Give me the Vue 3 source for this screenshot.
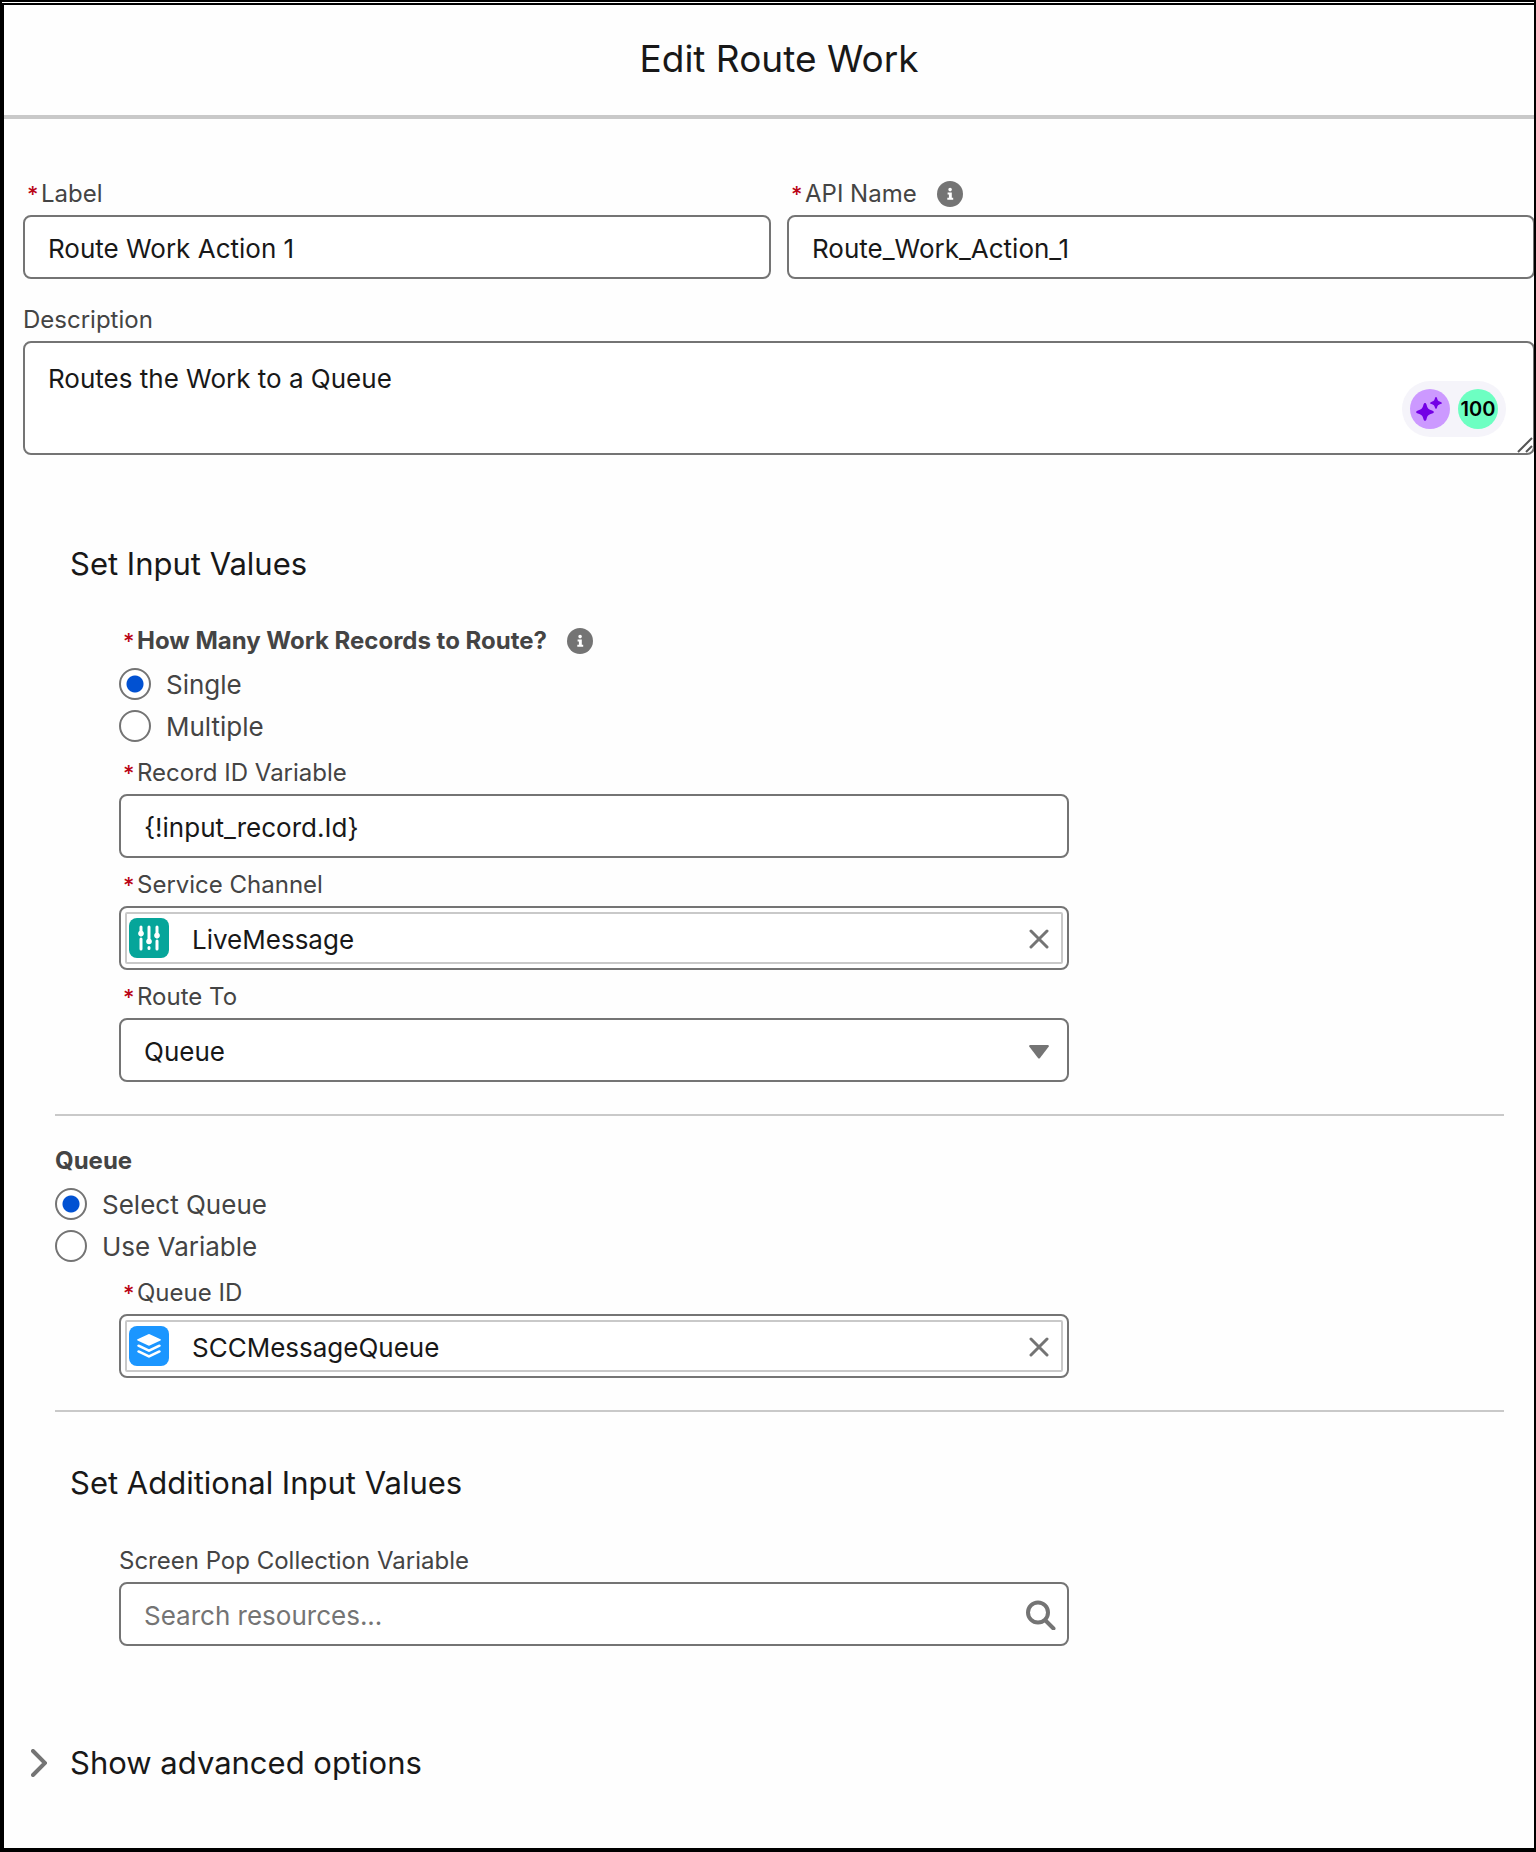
<template>
  <div class="frame">
    <form class="panel" @submit.prevent>
      <header class="header">
        <h1>Edit Route Work</h1>
      </header>

      <div class="details">
        <div class="row">
          <div class="field">
            <div class="label-line">
              <label for="label"><abbr>*</abbr>Label</label>
            </div>
            <input id="label" v-model="label" class="box" type="text" required />
          </div>
          <div class="field">
            <div class="label-line">
              <label for="api-name"><abbr>*</abbr>API Name</label>
              <button type="button" class="info" aria-label="Help">
                <svg viewBox="0 0 26 26">
                  <circle cx="13" cy="13" r="13" />
                  <path d="M11.3 8.6a1.8 1.8 0 1 1 3.6 0a1.8 1.8 0 1 1-3.6 0zM10.6 11.6h4.2v5.2h1.4v2h-5.9v-2h1.6v-3.2h-1.3z" />
                </svg>
              </button>
            </div>
            <input id="api-name" v-model="apiName" class="box" type="text" required />
          </div>
        </div>

        <div class="field description">
          <div class="label-line">
            <label for="description">Description</label>
          </div>
          <div class="area">
            <textarea id="description" v-model="description" class="box"></textarea>
            <div class="badges">
              <button type="button" class="badge sparkle" aria-label="Assistant">
                <svg viewBox="0 0 40 40">
                  <path d="M15 14c.8 0 1.200.6 1.500 1.500c1.200 4.200 1.400 4.400 5.600 5.900c2.400.8 2.400 2.400 0 3.200c-4.200 1.500-4.400 1.700-5.600 5.600c-.6 2.200-2.400 2.200-3 0c-1.200-3.900-1.400-4.100-5.600-5.600c-2.400-.8-2.400-2.400 0-3.200c4.200-1.500 4.400-1.700 5.600-5.900c.3-.9.700-1.500 1.500-1.500z" />
                  <path d="M26 8c.5 0 .8.400 1 1c.8 2.700.9 2.900 3.700 3.900c1.600.5 1.600 1.700 0 2.200c-2.800 1-2.900 1.200-3.700 3.700c-.4 1.500-1.600 1.500-2 0c-.8-2.500-.9-2.700-3.700-3.700c-1.600-.5-1.600-1.700 0-2.200c2.800-1 2.900-1.200 3.700-3.900c.2-.6.500-1 1-1z" />
                </svg>
              </button>
              <button type="button" class="badge score">100</button>
            </div>
            <svg class="grip" viewBox="0 0 16 16">
              <path d="M1 15L15 1M9 15l6-6" />
            </svg>
          </div>
        </div>
      </div>

      <section class="section">
        <h2>Set Input Values</h2>
        <div class="inputs">
          <fieldset>
            <legend class="label-line">
              <span><abbr>*</abbr>How Many Work Records to Route?</span>
              <button type="button" class="info" aria-label="Help">
                <svg viewBox="0 0 26 26">
                  <circle cx="13" cy="13" r="13" />
                  <path d="M11.3 8.6a1.8 1.8 0 1 1 3.6 0a1.8 1.8 0 1 1-3.6 0zM10.6 11.6h4.2v5.2h1.4v2h-5.9v-2h1.6v-3.2h-1.3z" />
                </svg>
              </button>
            </legend>
            <label v-for="option in countOptions" :key="option" class="radio">
              <input v-model="count" type="radio" name="count" :value="option" />
              {{ option }}
            </label>
          </fieldset>

          <div class="field">
            <div class="label-line">
              <label for="record-id"><abbr>*</abbr>Record ID Variable</label>
            </div>
            <input id="record-id" v-model="recordId" class="box" type="text" required />
          </div>

          <div class="field">
            <div class="label-line">
              <label for="channel"><abbr>*</abbr>Service Channel</label>
            </div>
            <div class="box lookup">
              <div class="pill">
                <svg class="entity channel" viewBox="0 0 40 40">
                  <path d="M12 9v8M12 21v10M20 9v14M20 29.500v1M28 9v10M28 23v8" />
                  <circle cx="12" cy="15.500" r="2.800" />
                  <circle cx="20" cy="23.500" r="2.800" />
                  <circle cx="28" cy="17.500" r="2.800" />
                </svg>
                <input id="channel" v-model="channel" type="text" readonly />
                <button type="button" class="clear" aria-label="Clear service channel" @click="channel = ''">
                  <svg viewBox="0 0 20 20"><path d="M2 2l16 16M18 2L2 18" /></svg>
                </button>
              </div>
            </div>
          </div>

          <div class="field">
            <div class="label-line">
              <label for="route-to"><abbr>*</abbr>Route To</label>
            </div>
            <div class="select">
              <select id="route-to" v-model="routeTo" class="box">
                <option>Queue</option>
                <option>Agent</option>
                <option>Skills</option>
              </select>
              <svg class="caret" viewBox="0 0 20 14"><path d="M1 0h18q1.500.5.600 1.700L11 13q-1 1.200-2 0L.4 1.700Q-.5.500 1 0z" /></svg>
            </div>
          </div>
        </div>
      </section>

      <section class="queue">
        <fieldset>
          <legend class="label-line">Queue</legend>
          <label v-for="option in queueOptions" :key="option" class="radio">
            <input v-model="queueMode" type="radio" name="queue-mode" :value="option" />
            {{ option }}
          </label>
        </fieldset>
        <div class="inputs">
          <div class="field">
            <div class="label-line">
              <label for="queue-id"><abbr>*</abbr>Queue ID</label>
            </div>
            <div class="box lookup">
              <div class="pill">
                <svg class="entity stack" viewBox="0 0 40 40">
                  <path d="M20.700 8.200L31.500 13.200q1 .6 0 1.200L20.700 19.600q-.7.300-1.400 0L8.500 14.400q-1-.6 0-1.200L19.300 8.200q.7-.3 1.400 0z" />
                  <path d="M8.300 19.200q.9-1.200 2.300-.5L20 23.200l9.400-4.500q1.400-.7 2.300.5q.4.900-.6 1.500L20.700 25.800q-.7.300-1.400 0L8.900 20.700q-1-.6-.6-1.500z" />
                  <path d="M8.300 24.900q.9-1.200 2.300-.5L20 28.900l9.400-4.500q1.400-.7 2.300.5q.4.900-.6 1.500L20.700 31.500q-.7.300-1.400 0L8.900 26.400q-1-.6-.6-1.500z" />
                </svg>
                <input id="queue-id" v-model="queueId" type="text" readonly />
                <button type="button" class="clear" aria-label="Clear queue" @click="queueId = ''">
                  <svg viewBox="0 0 20 20"><path d="M2 2l16 16M18 2L2 18" /></svg>
                </button>
              </div>
            </div>
          </div>
        </div>
      </section>

      <section class="section additional">
        <h2>Set Additional Input Values</h2>
        <div class="inputs">
          <div class="field">
            <div class="label-line">
              <label for="screen-pop">Screen Pop Collection Variable</label>
            </div>
            <div class="box search">
              <input id="screen-pop" v-model="screenPop" type="text" placeholder="Search resources..." />
              <svg viewBox="0 0 30 30"><circle cx="12" cy="12.500" r="10" /><path d="M19.500 20.500l8 8" /></svg>
            </div>
          </div>
        </div>
      </section>

      <button type="button" class="advanced" :aria-expanded="showAdvanced" @click="showAdvanced = !showAdvanced">
        <svg viewBox="0 0 16 28"><path d="M2 2l12 12L2 26" /></svg>
        Show advanced options
      </button>
    </form>
  </div>
</template>

<script setup>
import { ref } from 'vue'

const label = ref('Route Work Action 1')
const apiName = ref('Route_Work_Action_1')
const description = ref('Routes the Work to a Queue')

const countOptions = ['Single', 'Multiple']
const count = ref('Single')
const recordId = ref('{!input_record.Id}')
const channel = ref('LiveMessage')
const routeTo = ref('Queue')

const queueOptions = ['Select Queue', 'Use Variable']
const queueMode = ref('Select Queue')
const queueId = ref('SCCMessageQueue')

const screenPop = ref('')
const showAdvanced = ref(false)
</script>

<style>
body {
  margin: 0;
  background: white;
}
</style>

<style scoped>
* {
  box-sizing: border-box;
}

.frame {
  min-height: 100vh;
  display: flex;
  border: 2px solid black;
  padding-top: 1px;
  font-family: Inter, "Liberation Sans", sans-serif;
  font-size: 26px;
  color: #181818;
}

.panel {
  flex: 1;
  min-width: 0;
  border: 2px solid black;
  border-right: 0;
  background: #fefefe;
  overflow: hidden;
}

.header {
  height: 114px;
  display: flex;
  align-items: center;
  justify-content: center;
  padding: 0 0 2px 20px;
  border-bottom: 4px solid #c9c9c9;
}

h1, h2 {
  margin: 0;
  font-weight: 400;
}

h1 {
  font-size: 37px;
  line-height: 48px;
}

h2 {
  font-size: 31px;
  line-height: 40px;
}

input, textarea, select, button {
  font: inherit;
  color: inherit;
}

button {
  padding: 0;
  border: 0;
  background: none;
  cursor: pointer;
}

svg {
  display: block;
}

.details {
  margin: 48px -1px 0 19px;
}

.row {
  display: grid;
  grid-template-columns: 1fr 1fr;
  gap: 16px;
}

.description {
  margin-top: 14px;
}

.label-line {
  display: flex;
  align-items: center;
  gap: 20px;
  padding: 10px 0 4px;
  font-size: 24px;
  line-height: 34px;
  color: #444;
}

abbr {
  display: inline-block;
  width: 18px;
  padding-left: 4px;
  font-size: 22px;
  font-weight: 500;
  color: #ba0517;
}

.info {
  width: 26px;
  height: 26px;
}

.info circle {
  fill: #747474;
}

.info path {
  fill: white;
}

.box {
  display: block;
  width: 100%;
  height: 64px;
  padding: 2px 23px 0;
  border: 2px solid #747474;
  border-radius: 8px;
  background: white;
}

.area {
  position: relative;
}

textarea.box {
  height: 114px;
  padding: 17px 23px;
  line-height: 38px;
  resize: none;
}

.badges {
  position: absolute;
  top: 40px;
  right: 29px;
  display: flex;
  gap: 8px;
  padding: 8px;
  border-radius: 28px;
  background: #f5f4fa;
}

.badge {
  width: 40px;
  height: 40px;
  border-radius: 50%;
}

.sparkle {
  background: #cc99ff;
}

.sparkle path {
  fill: #7300e5;
}

.score {
  background: #6dffc2;
  color: black;
  font-size: 20px;
  font-weight: 600;
}

.grip {
  position: absolute;
  right: 2px;
  bottom: 2px;
  width: 16px;
  height: 16px;
  fill: none;
  stroke: #555;
  stroke-width: 2;
}

.section {
  margin: 89px 30px 0 66px;
}

.inputs {
  max-width: 950px;
  margin-left: 49px;
}

fieldset {
  margin: 0;
  padding: 0 0 4px;
  border: 0;
}

legend.label-line {
  padding: 0 0 10px;
  font-weight: 700;
}

.section fieldset {
  margin-top: 40px;
}

.radio {
  display: flex;
  align-items: center;
  gap: 15px;
  height: 32px;
  color: #444;
}

.radio + .radio {
  margin-top: 10px;
}

.radio input {
  appearance: none;
  width: 32px;
  height: 32px;
  margin: 0;
  border: 2px solid #747474;
  border-radius: 50%;
  background: white;
}

.radio input:checked {
  background: radial-gradient(circle, #0151d2 8px, white 9px);
}

.lookup {
  padding: 4px;
}

.pill {
  display: flex;
  align-items: center;
  height: 52px;
  padding: 0 12px 0 2px;
  border: 2px solid #c9c9c9;
  border-radius: 2px;
}

.pill input, .search input {
  flex: 1;
  min-width: 0;
  padding: 0;
  border: 0;
  outline: 0;
  background: none;
}

.pill input {
  padding-top: 2px;
}

.entity {
  width: 40px;
  height: 40px;
  margin-right: 23px;
  border-radius: 8px;
}

.channel {
  background: #06a59a;
  fill: white;
  stroke: white;
  stroke-width: 3;
  stroke-linecap: round;
}

.channel circle {
  stroke: none;
}

.stack {
  background: #1b96ff;
  fill: white;
}

.clear {
  padding-top: 2px;
}

.clear svg {
  width: 20px;
  height: 20px;
  fill: none;
  stroke: #747474;
  stroke-width: 3;
  stroke-linecap: round;
}

.select {
  position: relative;
}

.select select {
  appearance: none;
}

.caret {
  position: absolute;
  top: 27px;
  right: 20px;
  width: 20px;
  height: 14px;
  fill: #747474;
  pointer-events: none;
}

.queue {
  margin: 32px 30px 0 51px;
  padding: 28px 0 32px;
  border-top: 2px solid #c9c9c9;
  border-bottom: 2px solid #c9c9c9;
}

.queue .inputs {
  margin-left: 64px;
}

.additional {
  margin-top: 51px;
}

.additional .inputs {
  margin-top: 31px;
}

.search {
  display: flex;
  align-items: center;
  padding-right: 11px;
}

.search input::placeholder {
  color: #747474;
  opacity: 1;
}

.search svg {
  width: 30px;
  height: 30px;
  fill: none;
  stroke: #747474;
  stroke-width: 4;
  stroke-linecap: round;
}

.advanced {
  display: flex;
  align-items: center;
  gap: 23px;
  margin: 97px 0 40px 27px;
  font-size: 31px;
  line-height: 40px;
}

.advanced svg {
  width: 16px;
  height: 28px;
  fill: none;
  stroke: #747474;
  stroke-width: 4;
  stroke-linecap: round;
}
</style>
